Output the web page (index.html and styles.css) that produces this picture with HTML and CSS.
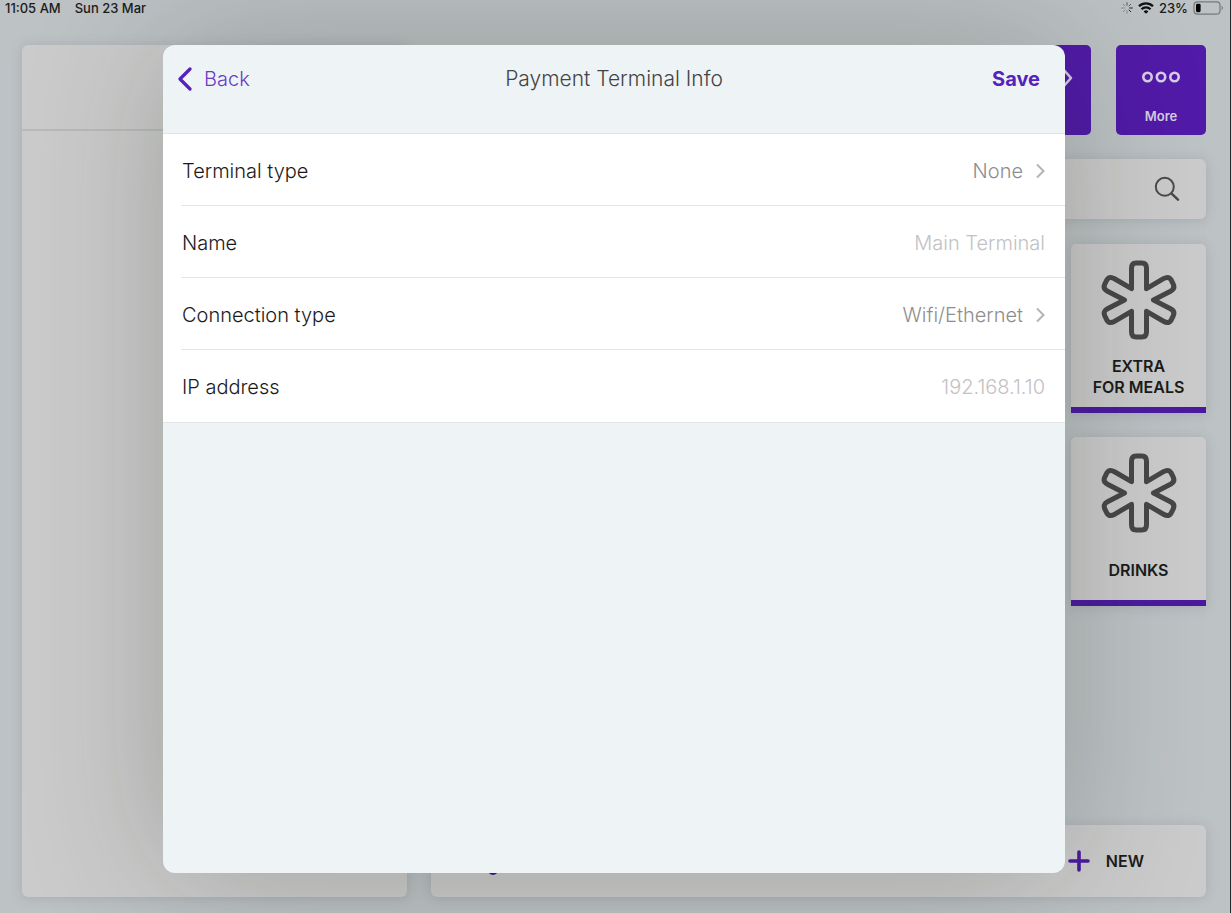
FILE: index.html
```html
<!DOCTYPE html>
<html lang="en">
<head>
<meta charset="utf-8">
<title>Payment Terminal Info</title>
<link rel="stylesheet" href="styles.css">
</head>
<body>
<div class="screen">
  <header class="status">
    <span>11:05 AM</span>
    <span class="status-date">Sun 23 Mar</span>
    <span class="status-right">
      <svg class="spinner" viewBox="0 0 12 12" width="12" height="12" fill="none" stroke="#555b5b" stroke-width="1" stroke-linecap="round"><path d="M6 .7v2.6M9.7 2.3 8 4"/><path d="M11.3 6H8.7M9.7 9.7 8 8" stroke="#222"/><path d="M6 11.3V8.7M2.3 9.7 4 8M.7 6h2.6M2.3 2.3 4 4" stroke="#858b8b"/></svg>
      <svg viewBox="0 0 16 12" width="16" height="12" fill="none" stroke="#111"><path d="M1 4.300a9.900 9.900 0 0 1 14 0" stroke-width="2.300"/><path d="M3.500 7.300a6.400 6.400 0 0 1 9 0" stroke-width="2.200"/><path d="M8 11.800 5.600 9.500a3.400 3.400 0 0 1 4.800 0z" fill="#111" stroke="none"/></svg>
      <span>23%</span>
      <svg viewBox="0 0 31 14" width="31" height="14"><rect x="1" y=".8" width="26" height="12.4" rx="3.4" fill="none" stroke="#757b7b" stroke-width="1.2"/><rect x="3" y="2.8" width="4.6" height="8.4" rx="1.4" fill="#000"/><path d="M28.6 4.8c1.6.6 1.6 3.8 0 4.4z" fill="#757b7b"/></svg>
    </span>
  </header>

  <main class="workspace">
    <section class="order card"><div class="order-head"></div></section>
    <section class="catalog">
      <nav class="actions">
        <button class="action" aria-label="Transfer"><svg viewBox="0 0 54 24" width="54" height="24" fill="none" stroke="#d8cde6" stroke-width="2.6" stroke-linecap="round" stroke-linejoin="round"><path d="M10 3 2 12l8 9M44 3l8 9-8 9"/></svg></button>
        <button class="action">
          <svg viewBox="0 0 38 12" width="38" height="12" fill="none" stroke="#d8cde6" stroke-width="2.6"><circle cx="5.5" cy="6" r="4.2"/><circle cx="19" cy="6" r="4.2"/><circle cx="32.5" cy="6" r="4.2"/></svg>
          <span class="action-label">More</span>
        </button>
      </nav>
      <button class="search card" aria-label="Search"><svg viewBox="0 0 26 26" width="26" height="26" fill="none" stroke="#4b4b4b" stroke-width="2" stroke-linecap="round"><circle cx="10.8" cy="10.8" r="9"/><path d="m17.6 17.6 6.4 6" stroke-width="2.6"/></svg></button>
      <div class="tiles">
        <button class="tile card">
          <svg viewBox="0 0 76 80" width="76" height="80"><use href="#asterisk"/></svg>
          <span class="tile-label">EXTRA<br>FOR MEALS</span>
        </button>
        <button class="tile card">
          <svg viewBox="0 0 76 80" width="76" height="80"><defs><path id="asterisk" fill="none" stroke="#474747" stroke-width="5" stroke-linejoin="round" d="M30.500 28.7V8.5Q30.500 3 35 3h6q4.500 0 4.500 5.500v20.200l17-10q5-2.800 7.500 1l2 4q2.500 5-2.500 7.500l-17 8.800 17 8.800q5 2.500 2.500 7.500l-2 4q-2.500 3.800-7.500 1l-17-10v20.200Q45.500 77 41 77h-6q-4.500 0-4.500-5.500V51.300l-17 10q-5 2.800-7.500-1l-2-4q-2.500-5 2.500-7.500l17-8.800-17-8.800q-5-2.500-2.500-7.500l2-4q2.500-3.800 7.500-1z"/></defs><use href="#asterisk"/></svg>
          <span class="tile-label">DRINKS</span>
        </button>
      </div>
      <footer class="toolbar card">
        <span class="toolbar-dot"></span>
        <button class="new"><svg viewBox="0 0 22 22" width="22" height="22" stroke="#4a1a9f" stroke-width="3.600" stroke-linecap="round"><path d="M11 2v18M2 11h18"/></svg><span>NEW</span></button>
      </footer>
    </section>
  </main>

  <div class="overlay">
    <form class="dialog" role="dialog" aria-labelledby="dialog-title">
      <header class="dialog-head">
        <button type="button" class="back"><svg viewBox="0 0 14 24" width="14" height="24" fill="none" stroke="#5522bd" stroke-width="3.200" stroke-linecap="round" stroke-linejoin="round"><path d="M12 2 2 12l10 10"/></svg>Back</button>
        <h1 class="title" id="dialog-title">Payment Terminal Info</h1>
        <button type="button" class="save">Save</button>
      </header>
      <div class="rows">
        <button type="button" class="row"><span>Terminal type</span><span class="value">None<svg viewBox="0 0 9 16" width="9" height="16" fill="none" stroke="#b4b4b4" stroke-width="2"><path d="m1 1.500 6.500 6.500L1 14.500"/></svg></span></button>
        <div class="row"><label for="name">Name</label><input class="field" id="name" type="text" placeholder="Main Terminal"></div>
        <button type="button" class="row"><span>Connection type</span><span class="value">Wifi/Ethernet<svg viewBox="0 0 9 16" width="9" height="16" fill="none" stroke="#b4b4b4" stroke-width="2"><path d="m1 1.500 6.500 6.500L1 14.500"/></svg></span></button>
        <div class="row"><label for="ip">IP address</label><input class="field" id="ip" type="text" placeholder="192.168.1.10"></div>
      </div>
    </form>
  </div>
</div>
</body>
</html>
```
FILE: styles.css
```css
* { box-sizing: border-box; }
body { margin: 0; font-family: Inter, "Open Sans", sans-serif; color: #1b1b1b; }
button, input { font: inherit; color: inherit; border: 0; background: none; padding: 0; }
svg { display: block; flex: none; }

.screen {
  position: relative;
  display: flex;
  flex-direction: column;
  min-height: 100vh;
  background: #bdc2c5;
  border-right: 1px solid #25282c;
}
.card { background: #cbcbcb; border-radius: 6px; box-shadow: 0 1px 12px rgba(90, 95, 100, .22); }

.status {
  display: flex;
  align-items: center;
  height: 16px;
  padding: 0 6px 0 5px;
  font-size: 13px;
  font-weight: 500;
  position: relative;
  z-index: 3;
}
.status-date { margin-left: 14px; }
.status-right { display: flex; align-items: center; gap: 5px; margin-left: auto; }

.workspace { flex: 1; display: grid; grid-template-columns: 385fr 775fr; gap: 24px; padding: 29px 24px 16px 22px; }
.order-head { height: 86px; border-bottom: 2px solid #b9bbbb; }
.catalog { display: flex; flex-direction: column; }

.actions { display: flex; justify-content: flex-end; gap: 25px; }
.action {
  display: flex;
  flex-direction: column;
  align-items: center;
  gap: 25px;
  width: 90px;
  height: 90px;
  padding-top: 26px;
  border-radius: 5px;
  background: #511aa8;
  color: #d8cde6;
}
.action:first-child { padding-top: 21px; }
.action-label { font-size: 13px; line-height: 16px; font-weight: 600; }

.search { display: flex; align-items: center; justify-content: flex-end; height: 60px; margin-top: 24px; padding-right: 26px; }
.tiles { display: flex; flex-direction: column; align-items: flex-end; gap: 24px; margin-top: 25px; }
.tile {
  display: flex;
  flex-direction: column;
  align-items: center;
  width: 135px;
  height: 169px;
  padding-top: 16px;
  border-bottom: 6px solid #4c1aa0;
  border-radius: 5px 5px 0 0;
}
.tile-label { flex: 1; display: flex; align-items: center; padding-top: 7px; text-align: center; font-size: 16px; line-height: 21px; font-weight: 600; }

.toolbar { position: relative; display: flex; align-items: center; justify-content: flex-end; height: 72px; margin-top: auto; padding-right: 62px; }
.toolbar-dot { position: absolute; left: 57px; top: 40px; width: 10px; height: 10px; border-radius: 50%; background: #3a1690; }
.new { display: flex; align-items: center; gap: 16px; font-size: 16px; font-weight: 600; }

.overlay { position: absolute; inset: 0; display: flex; padding: 45px 165px 40px 163px; overflow: hidden; }
.dialog { flex: 1; border-radius: 12px; background: #eef3f6; box-shadow: 0 0 140px rgba(20, 35, 15, .24); }
.dialog-head {
  display: grid;
  grid-template-columns: 1fr auto 1fr;
  align-items: start;
  height: 89px;
  padding: 20px 15px 0;
  border-bottom: 1px solid #dfe3e5;
  font-size: 20px;
  line-height: 28px;
}
.back { display: flex; align-items: center; gap: 12px; justify-self: start; color: #6a3cc4; font-weight: 300; }
.title { margin: 0; font-size: 21px; line-height: 28px; font-weight: 300; color: #444; }
.save { justify-self: end; margin-right: 10px; color: #5522bd; font-weight: 700; }

.rows { background: #fff; padding-left: 18px; border-bottom: 1px solid #e0e4e6; font-size: 20px; font-weight: 300; }
.row { display: flex; align-items: center; justify-content: space-between; width: 100%; height: 72px; padding: 2px 20px 0 1px; border-bottom: 1px solid #e4e4e6; }
.row:last-child { border-bottom: 0; }
.value { display: flex; align-items: center; gap: 13px; color: #8e8e8e; }
.field { flex: 1; min-width: 0; text-align: right; outline: 0; }
.field::placeholder { color: #c2c2c4; opacity: 1; }
```
